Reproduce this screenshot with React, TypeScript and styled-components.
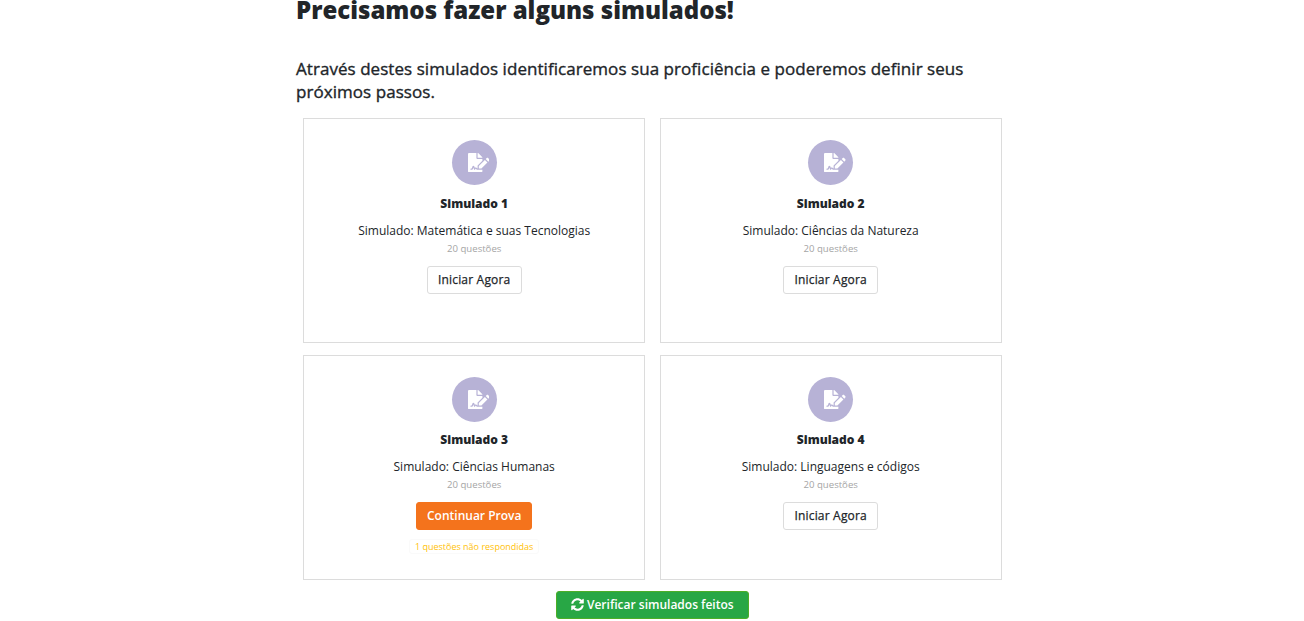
import styled, { createGlobalStyle } from "styled-components";
import { FaFileSignature, FaSyncAlt } from "react-icons/fa";

type Simulado = {
  id: number;
  area: string;
  questoes: number;
  naoRespondidas?: number;
};

const simulados: Simulado[] = [
  { id: 1, area: "Matemática e suas Tecnologias", questoes: 20 },
  { id: 2, area: "Ciências da Natureza", questoes: 20 },
  { id: 3, area: "Ciências Humanas", questoes: 20, naoRespondidas: 1 },
  { id: 4, area: "Linguagens e códigos", questoes: 20 },
];

const App: React.FC = () => {
  return (
    <>
      <GlobalStyle />
      <Container>
        <Title>Precisamos fazer alguns simulados!</Title>
        <Subtitle>
          Através destes simulados identificaremos sua proficiência e poderemos
          definir seus próximos passos.
        </Subtitle>
        <Grid>
          {simulados.map((s) => (
            <Card key={s.id}>
              <IconCircle>
                <FaFileSignature />
              </IconCircle>
              <CardTitle>Simulado {s.id}</CardTitle>
              <Area>Simulado: {s.area}</Area>
              <Count>{s.questoes} questões</Count>
              {s.naoRespondidas ? (
                <>
                  <Button $variant="orange">Continuar Prova</Button>
                  <Pending>{s.naoRespondidas} questões não respondidas</Pending>
                </>
              ) : (
                <Button $variant="light">Iniciar Agora</Button>
              )}
            </Card>
          ))}
        </Grid>
        <Footer>
          <Button $variant="green">
            <FaSyncAlt />
            Verificar simulados feitos
          </Button>
        </Footer>
      </Container>
    </>
  );
};

const GlobalStyle = createGlobalStyle`
  * {
    box-sizing: border-box;
  }

  body {
    margin: 0;
    background: #fff;
    color: #212529;
    font-family: "Open Sans", sans-serif;
  }
`;

const Container = styled.main`
  width: 712px;
  margin: 0 auto;
  display: flex;
  flex-direction: column;
`;

const Title = styled.h1`
  margin: 0;
  font-size: 24px;
  font-weight: 800;
  line-height: 20px;
`;

const Subtitle = styled.h2`
  margin: 37px 0 0;
  font-size: 17px;
  font-weight: 500;
  line-height: 23px;
  letter-spacing: 0.05px;
  -webkit-text-stroke: 0.35px currentColor;
`;

const Grid = styled.section`
  margin: 15.4px 0 0 7.2px;
  display: grid;
  grid-template-columns: 342px 342px;
  gap: 11.5px 14.5px;
`;

const Card = styled.article`
  height: 225px;
  padding-top: 21px;
  border: 1px solid #dcdcdc;
  display: flex;
  flex-direction: column;
  align-items: center;
`;

const IconCircle = styled.div`
  width: 45px;
  height: 45px;
  padding-left: 9px;
  border-radius: 50%;
  background: #b7b2d6;
  color: #fff;
  display: flex;
  align-items: center;
  justify-content: center;

  svg {
    width: 21.6px;
    height: 19.2px;
  }
`;

const CardTitle = styled.h3`
  margin: 9.3px 0 0;
  font-size: 12px;
  font-weight: 800;
  line-height: 18px;
`;

const Area = styled.p`
  margin: 9px 0 0;
  font-size: 12px;
  line-height: 18px;
`;

const Count = styled.p`
  margin: 0 0 9px;
  color: #a5a5a5;
  font-size: 9.6px;
  line-height: 17.2px;
`;

const variants = {
  light: `
    color: #212529;
    background: #fff;
    border-color: #dcdcdc;
    padding: 0 10.2px;
    font-weight: 500;
    letter-spacing: 0.19px;
    -webkit-text-stroke: 0.25px currentColor;
  `,
  orange: `
    color: #fff;
    background: #f4731c;
    border-color: #f4731c;
    font-weight: 600;
  `,
  green: `
    color: #fff;
    background: #28a745;
    border-color: #4caf27;
    padding: 0 14.3px;
    font-weight: 600;
  `,
};

const Button = styled.button<{ $variant: keyof typeof variants }>`
  height: 28px;
  padding: 0 10px;
  border: 1px solid;
  border-radius: 3px;
  font-family: inherit;
  font-size: 12px;
  line-height: 18px;
  display: inline-flex;
  align-items: center;
  gap: 3px;
  cursor: pointer;
  ${({ $variant }) => variants[$variant]}

  svg {
    width: 13px;
    height: 13px;
  }
`;

const Pending = styled.span`
  margin-top: 9px;
  padding: 0 5px;
  border: 1px solid #fafafa;
  border-radius: 3px;
  color: #ffc107;
  font-size: 9px;
  line-height: 13px;
`;

const Footer = styled.div`
  margin: 11px 0 0 0.6px;
  display: flex;
  justify-content: center;
`;

export default App;
